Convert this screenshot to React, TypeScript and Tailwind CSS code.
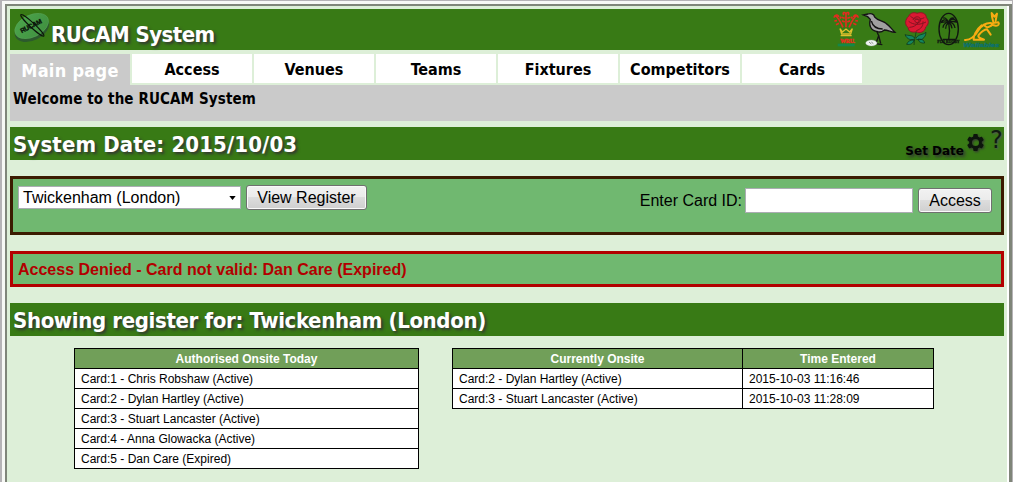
import React from "react";

const tabs = ["Access", "Venues", "Teams", "Fixtures", "Competitors", "Cards"];

const authorised = [
  "Card:1 - Chris Robshaw (Active)",
  "Card:2 - Dylan Hartley (Active)",
  "Card:3 - Stuart Lancaster (Active)",
  "Card:4 - Anna Glowacka (Active)",
  "Card:5 - Dan Care (Expired)",
];

const onsite = [
  ["Card:2 - Dylan Hartley (Active)", "2015-10-03 11:16:46"],
  ["Card:3 - Stuart Lancaster (Active)", "2015-10-03 11:28:09"],
];

const heading =
  "whitespace-nowrap font-['DejaVu_Sans_Condensed','DejaVu_Sans',sans-serif] [font-stretch:condensed] font-bold text-white [text-shadow:2px_2px_3px_#333]";

function Logo() {
  return (
    <svg viewBox="0 0 120 102" className="h-[34px] w-10 shrink-0">
      <defs>
        <linearGradient id="ball" x1="0" y1="0" x2="1" y2="1">
          <stop offset="0" stopColor="#4da64d" />
          <stop offset="1" stopColor="#3f8f3f" />
        </linearGradient>
      </defs>
      <ellipse cx="60" cy="57" rx="55" ry="34" transform="rotate(-26 60 57)" fill="#2c5a2d" />
      <ellipse cx="59" cy="48" rx="54" ry="33" transform="rotate(-26 59 48)" fill="url(#ball)" stroke="#5aa55a" strokeWidth="1.5" />
      <ellipse cx="61" cy="46" rx="47" ry="7" transform="rotate(43 61 46)" fill="none" stroke="#0c160b" strokeWidth="3.5" />
      <text x="29" y="70" transform="rotate(-27 29 70)" fontFamily="Liberation Sans, sans-serif" fontSize="20" fontWeight="bold" textLength="70" fill="#081008" stroke="#081008">RUCAM</text>
    </svg>
  );
}

function Crests() {
  return (
    <svg viewBox="25 30 504 114" className="h-[38px] w-[168px] shrink-0">
      <g fill="none" stroke="#e52b20" strokeWidth="5">
        <path d="M64 82V38M58 45c-7-7 3-11 6-3 3-8 13-4 6 3M60 55l-9-3M68 55l9-3M60 66l-8-4M68 66l8-4" />
        <path d="M55 82C48 68 44 57 34 48M28 53c2-8 13-12 14-2M37 62l-8 1M43 70l-9 4M46 56l3-6" />
        <path d="M73 82c7-14 11-25 21-34M101 53c-2-8-13-12-14-2M92 62l8 1M86 70l9 4M83 56l-3-6" />
      </g>
      <path d="M46 86l7 10 11-9 11 9 8-10-5 16H51zM48 107h33" fill="none" stroke="#dfc02d" strokeWidth="4" />
      <text x="47" y="128" fill="#f02b20" stroke="#f02b20" fontFamily="Liberation Serif, serif" fontSize="17" fontWeight="bold" textLength="44">WRU.</text>
      <path d="M39 131h51v8H39z" fill="#138748" />
      <path d="M116 45l14-3c7-3 18-1 20 9 9 11 24 11 34 19 12 8 16 17 27 27-10 1-21-7-32-7-7 6-17 7-23 4-18-2-24-18-19-36l-8-8z" fill="#a0a0a0" stroke="#141414" strokeWidth="4" />
      <path d="M140 63c4 16 15 24 34 24M156 93l6 14-8 23M162 106l6 24M153 131l20 3" fill="none" stroke="#141414" strokeWidth="4" />
      <ellipse cx="140" cy="129" rx="17" ry="9" fill="#edf4ef" stroke="#aaa" />
      <path d="M133 126l7 6M140 126l6 5" stroke="#888" strokeWidth="3" />
      <path d="M275 92c-3 17-6 29-7 43M270 114c-7-10-18-6-29-10 7 15 18 17 29 13M274 114c10-13 19-8 30-17-1 17-15 27-30 20M268 120c-12-1-20 6-22 13 12 2 20-3 22-13M280 117c2 10 12 13 20 12-1-8-8-12-20-12" fill="#14865f" stroke="#092e1b" strokeWidth="2" />
      <path d="M252 49c5-13 19-12 25-9 14-5 28 0 28 13 10 9 6 22-2 28-2 16-19 20-28 14-12 4-25-1-24-12-12-8-10-25 1-34z" fill="#db1832" stroke="#941326" strokeWidth="3" />
      <path d="M257 48c10 11 26 13 42 5M252 64c14 11 32 12 52 2M254 82c16-1 26-9 30-22M275 92c15-5 21-15 20-28M265 60c4-13 22-12 23-1 0 11-15 13-18 3 4-7 11-5 12-1" fill="none" stroke="#841422" strokeWidth="3" />
      <g fill="none" stroke="#101610" strokeWidth="4">
        <ellipse cx="372" cy="87" rx="29" ry="47" />
        <path d="M372 67c4 20 3 36 0 51M372 67c-10-12-18-8-22 0 10-3 15-2 22 0-9 0-17 7-17 16M372 67c8-14 19-12 24-1-11-3-16-2-24 1 10-1 18 7 19 17M371 65c-6-11-12-13-16-10M373 65c3-10 9-13 16-10M371 68c-6 5-8 12-8 18M374 68c6 5 7 10 8 17M354 118h37" />
      </g>
      <text x="338" y="130" fill="#111711" stroke="#111711" fontFamily="Liberation Serif, serif" fontSize="14" fontWeight="bold" textLength="67" lengthAdjust="spacingAndGlyphs">FIJI RUGBY</text>
      <path d="M421 120c18 1 30-12 41-30 10-15 23-22 37-21M471 76c-18 14-25 34-24 43h31c-11-4-20-7-16-14 8-9 13-15 25-17l11 16M481 78c6 6 15 4 21-4l11 3c8 1 12-5 8-10l-16 2-5 8M506 66c-3-9-5-17-5-27l8 11 8-9-4 21" fill="none" stroke="#f7ac12" strokeWidth="6" strokeLinecap="round" strokeLinejoin="round" />
      <text x="416" y="140" fill="#0e716b" stroke="#0e716b" fontFamily="Liberation Sans, sans-serif" fontSize="16" fontStyle="italic" fontWeight="bold" textLength="108" lengthAdjust="spacingAndGlyphs">Wallabies</text>
    </svg>
  );
}

function Gear() {
  return (
    <svg viewBox="0 0 24 24" className="h-[21px] w-[21px] [filter:drop-shadow(1px_1px_1px_#333)]">
      <path fill="#0c150c" d="M19.14 12.94a7 7 0 0 0 0-1.88l2.03-1.58a.5.5 0 0 0 .12-.61l-1.92-3.32a.5.5 0 0 0-.59-.22l-2.39.96a7 7 0 0 0-1.62-.94l-.36-2.54a.5.5 0 0 0-.48-.41h-3.84a.5.5 0 0 0-.47.41l-.36 2.54a7 7 0 0 0-1.62.94l-2.39-.96a.5.5 0 0 0-.59.22L2.74 8.87a.5.5 0 0 0 .12.61l2.03 1.58a7 7 0 0 0 0 1.88l-2.03 1.58a.5.5 0 0 0-.12.61l1.92 3.32c.12.22.37.29.59.22l2.39-.96c.5.38 1.03.7 1.62.94l.36 2.54c.05.24.24.41.48.41h3.84c.24 0 .44-.17.47-.41l.36-2.54a7 7 0 0 0 1.62-.94l2.39.96c.22.08.47 0 .59-.22l1.92-3.32a.5.5 0 0 0-.12-.61zM12 16.1a4.1 4.1 0 1 1 0-8.2 4.1 4.1 0 0 1 0 8.2z" />
    </svg>
  );
}

const button =
  "rounded-[3px] border border-[#707070] bg-[linear-gradient(#f2f2f2,#ebebeb_49%,#dddddd_50%,#cfcfcf)] text-center text-[16px] leading-[22px] text-black shadow-[inset_0_0_0_1px_#fafafa]";
const th = "border border-black bg-[#719f59] px-0 pt-px pb-0 text-center font-bold text-white";
const td = "border border-black bg-white pt-px pb-0 pl-1.5 text-left";

export default function App() {
  return (
    <div className="h-[482px] w-[1013px] overflow-hidden bg-[#b5b3b6] pt-px pl-[2px] pr-px font-['Liberation_Sans',Arial,sans-serif] text-black">
      <div className="h-[500px] border-t-[3px] border-l-[3px] border-[#f7f8f5]">
        <div className="h-full border-2 border-r-[3px] border-[#7f8579] bg-[#ddefd8]">
          <div className="h-full border-r-2 border-white pt-[3px] pl-[3px] pr-[3px]">
            <header className="flex h-[41px] justify-between bg-[#387a15] pr-[3px]">
              <div className="flex pl-[2px] pt-px">
                <Logo />
                <h1 className={`${heading} -ml-px pt-[11px] text-[22px] leading-[28px] tracking-[-0.55px]`}>RUCAM System</h1>
              </div>
              <div className="pt-px"><Crests /></div>
            </header>

            <nav className="mt-1 flex h-[31px] gap-[2px] font-['DejaVu_Sans_Condensed','DejaVu_Sans',sans-serif] [font-stretch:condensed] font-bold">
              <a className="h-[31px] w-[120px] bg-[#cacaca] text-center text-[18px] leading-[33px] tracking-[0.3px] text-white">Main page</a>
              {tabs.map((tab) => (
                <a key={tab} className="h-[29px] w-[120px] bg-white text-center text-[16px] leading-[32px]">{tab}</a>
              ))}
            </nav>
            <div className="h-9 bg-[#cacaca] pl-[3px] pt-1 font-['DejaVu_Sans_Condensed','DejaVu_Sans',sans-serif] [font-stretch:condensed] text-[15px] font-bold leading-5 tracking-[0.12px]">Welcome to the RUCAM System</div>

            <section className="mt-1.5 flex h-[33px] justify-between bg-[#387a15] pl-[3px] pr-[2px]">
              <h2 className={`${heading} text-[22px] leading-[36px] tracking-[0.12px]`}>System Date: 2015/10/03</h2>
              <div className="flex">
                <span className="pt-[15px] font-['DejaVu_Sans',sans-serif] text-[12px] font-bold leading-[18px] [text-shadow:2px_2px_3px_#333]">Set Date</span>
                <span className="ml-px pt-[5px]"><Gear /></span>
                <span className="ml-[4px] w-3 font-['DejaVu_Sans',sans-serif] text-[24px] leading-[26px] text-[#101b10] [text-shadow:1px_1px_2px_#555]">?</span>
              </div>
            </section>

            <section className="mt-4 flex h-[59px] justify-between border-[3px] border-[#3b1b00] bg-[#70b870] pl-[5px] pr-[9px] text-[16px]">
              <div className="flex gap-[5px] pt-[6px]">
                <div className="mt-px flex h-[23px] w-[223px] items-center justify-between border border-[#abadb3] bg-white pl-[4px] pr-1">
                  <span>Twickenham (London)</span>
                  <svg viewBox="0 0 8 5" className="h-[4px] w-[7px]"><path d="M0 0h8L4 5z" /></svg>
                </div>
                <button className={`${button} h-[25px] w-[121px]`}>View Register</button>
              </div>
              <div className="flex pt-[9px]">
                <label className="leading-[25px]">Enter Card ID:</label>
                <input aria-label="Enter Card ID" className="ml-[3px] h-[25px] w-[168px] border border-[#abadb3] bg-white" />
                <button className={`${button} ml-[5px] h-[25px] w-[74px]`}>Access</button>
              </div>
            </section>

            <div className="mt-4 h-9 border-[3px] border-[#b20000] bg-[#70b870] pl-[5px] text-[16px] font-bold leading-[31px] text-[#b20000]">Access Denied - Card not valid: Dan Care (Expired)</div>

            <h2 className={`${heading} mt-4 h-[33px] bg-[#387a15] pl-[3px] text-[22px] leading-[36px] tracking-[-0.36px]`}>Showing register for: Twickenham (London)</h2>

            <div className="mt-3 flex items-start gap-[33px] pl-16 text-[12px] leading-[18px]">
              <table className="w-[345px] table-fixed border-collapse">
                <thead><tr className="h-5"><th className={th}>Authorised Onsite Today</th></tr></thead>
                <tbody>{authorised.map((name) => <tr key={name} className="h-5"><td className={td}>{name}</td></tr>)}</tbody>
              </table>
              <table className="w-[482px] table-fixed border-collapse">
                <colgroup><col className="w-[290px]" /><col /></colgroup>
                <thead><tr className="h-5"><th className={th}>Currently Onsite</th><th className={th}>Time Entered</th></tr></thead>
                <tbody>{onsite.map(([name, time]) => <tr key={name} className="h-5"><td className={td}>{name}</td><td className={td}>{time}</td></tr>)}</tbody>
              </table>
            </div>
          </div>
        </div>
      </div>
    </div>
  );
}
